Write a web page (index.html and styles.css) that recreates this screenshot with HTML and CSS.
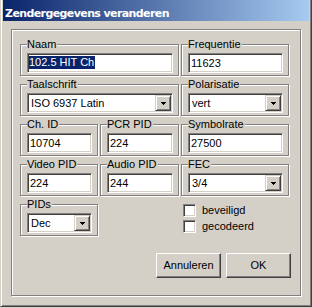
FILE: index.html
```html
<!DOCTYPE html>
<html lang="nl">
<head>
<meta charset="utf-8">
<title>Zendergegevens veranderen</title>
<link rel="stylesheet" href="styles.css">
</head>
<body>
<div class="window">
  <div class="titlebar"><span class="title">Zendergegevens veranderen</span></div>
  <div class="client">
    <div class="panel">
      <div class="grid">
        <fieldset class="group span2"><legend>Naam</legend><div class="field"><span class="selected">102.5 HIT Ch</span></div></fieldset>
        <fieldset class="group"><legend>Frequentie</legend><div class="field">11623</div></fieldset>

        <fieldset class="group span2"><legend>Taalschrift</legend>
          <div class="field combo"><span class="value">ISO 6937 Latin</span><span class="drop"><svg width="5" height="3" viewBox="0 0 5 3" shape-rendering="crispEdges"><rect x="0" y="0" width="5" height="1"/><rect x="1" y="1" width="3" height="1"/><rect x="2" y="2" width="1" height="1"/></svg></span></div>
        </fieldset>
        <fieldset class="group"><legend>Polarisatie</legend>
          <div class="field combo"><span class="value">vert</span><span class="drop"><svg width="5" height="3" viewBox="0 0 5 3" shape-rendering="crispEdges"><rect x="0" y="0" width="5" height="1"/><rect x="1" y="1" width="3" height="1"/><rect x="2" y="2" width="1" height="1"/></svg></span></div>
        </fieldset>

        <fieldset class="group"><legend>Ch. ID</legend><div class="field">10704</div></fieldset>
        <fieldset class="group"><legend>PCR PID</legend><div class="field">224</div></fieldset>
        <fieldset class="group"><legend>Symbolrate</legend><div class="field">27500</div></fieldset>

        <fieldset class="group"><legend>Video PID</legend><div class="field">224</div></fieldset>
        <fieldset class="group"><legend>Audio PID</legend><div class="field">244</div></fieldset>
        <fieldset class="group"><legend>FEC</legend>
          <div class="field combo"><span class="value">3/4</span><span class="drop"><svg width="5" height="3" viewBox="0 0 5 3" shape-rendering="crispEdges"><rect x="0" y="0" width="5" height="1"/><rect x="1" y="1" width="3" height="1"/><rect x="2" y="2" width="1" height="1"/></svg></span></div>
        </fieldset>

        <fieldset class="group"><legend>PIDs</legend>
          <div class="field combo"><span class="value">Dec</span><span class="drop"><svg width="5" height="3" viewBox="0 0 5 3" shape-rendering="crispEdges"><rect x="0" y="0" width="5" height="1"/><rect x="1" y="1" width="3" height="1"/><rect x="2" y="2" width="1" height="1"/></svg></span></div>
        </fieldset>
        <div class="checks">
          <div class="check"><span class="box"></span><span>beveiligd</span></div>
          <div class="check"><span class="box"></span><span>gecodeerd</span></div>
        </div>
      </div>
      <div class="buttons">
        <div class="button">Annuleren</div>
        <div class="button">OK</div>
      </div>
    </div>
  </div>
</div>
</body>
</html>
```
FILE: styles.css
```css
html, body {
  margin: 0;
  padding: 0;
  background: #d4d0c8;
}

body {
  font-family: "Liberation Sans", Arial, sans-serif;
  font-size: 11px;
  color: #000;
}

.window {
  box-sizing: border-box;
  width: 312px;
  height: 307px;
  background: #d4d0c8;
  border: 1px solid;
  border-top-width: 0;
  border-color: #d4d0c8 #404040 #404040 #d4d0c8;
  box-shadow: inset 1px 0 #fff, inset -1px -1px #808080;
  padding: 0 2px 2px 2px;
}

.titlebar {
  box-sizing: border-box;
  height: 21px;
  padding: 6px 0 0 2px;
  background: linear-gradient(to right, #0a246a, #a6caf0);
  color: #fff;
  font-family: "DejaVu Sans", Verdana, sans-serif;
  font-weight: bold;
  font-size: 11px;
  line-height: 15px;
  letter-spacing: -0.6px;
  white-space: nowrap;
}

.client {
  padding: 8px 0 0 8px;
}

.panel {
  box-sizing: border-box;
  width: 290px;
  height: 267px;
  border: 1px solid #808080;
  box-shadow: inset 1px 1px #fff, 1px 1px #fff;
  padding: 8px 9px 0 8px;
}

.grid {
  display: grid;
  grid-template-columns: 78px 79px 108px;
  grid-auto-rows: 38px;
  column-gap: 2px;
  row-gap: 2px;
  width: 269px;
}

.group {
  box-sizing: border-box;
  margin: 0;
  min-width: 0;
  padding: 0 5px 2px 6px;
  border: 1px solid #808080;
  box-shadow: inset 1px 1px #fff, 1px 1px #fff;
}

.span2 {
  grid-column: span 2;
}

.group legend {
  padding: 0 1px 0 0;
  margin: 0;
  line-height: 13px;
  background: #d4d0c8;
}

.field {
  box-sizing: border-box;
  height: 20px;
  margin-top: 2px;
  background: #fff;
  border: 1px solid;
  border-color: #808080 #fff #fff #808080;
  box-shadow: inset 1px 1px #404040, inset -1px -1px #d4d0c8;
  padding: 0 0 0 2px;
  line-height: 18px;
  white-space: nowrap;
  overflow: hidden;
}

.selected {
  display: inline-block;
  background: #0a246a;
  color: #fff;
  line-height: 13px;
  padding: 0 1px 0 0;
  margin-left: -1px;
  vertical-align: 1px;
}

.combo {
  display: flex;
  align-items: stretch;
  padding: 1px 1px 1px 3px;
  line-height: 16px;
}

.combo .value {
  flex: 1;
}

.drop {
  box-sizing: border-box;
  width: 16px;
  display: flex;
  align-items: center;
  justify-content: center;
  background: #d4d0c8;
  border: 1px solid;
  border-color: #d4d0c8 #404040 #404040 #d4d0c8;
  box-shadow: inset 1px 1px #fff, inset -1px -1px #808080;
  padding-top: 1px;
}

.drop svg {
  display: block;
  fill: #000;
}

.checks {
  grid-column: 3;
  display: flex;
  flex-direction: column;
  gap: 3px;
  padding: 6px 0 0 2px;
}

.check {
  display: flex;
  align-items: center;
  gap: 6px;
  height: 13px;
  line-height: 13px;
}

.box {
  box-sizing: border-box;
  width: 13px;
  height: 13px;
  background: #fff;
  border: 1px solid;
  border-color: #808080 #fff #fff #808080;
  box-shadow: inset 1px 1px #404040, inset -1px -1px #d4d0c8;
}

.buttons {
  display: flex;
  justify-content: flex-end;
  gap: 5px;
  margin-top: 17px;
}

.button {
  box-sizing: border-box;
  width: 65px;
  height: 25px;
  border: 1px solid;
  border-color: #fff #404040 #404040 #fff;
  box-shadow: inset -1px -1px #808080;
  display: flex;
  align-items: center;
  justify-content: center;
  line-height: 13px;
}
```
